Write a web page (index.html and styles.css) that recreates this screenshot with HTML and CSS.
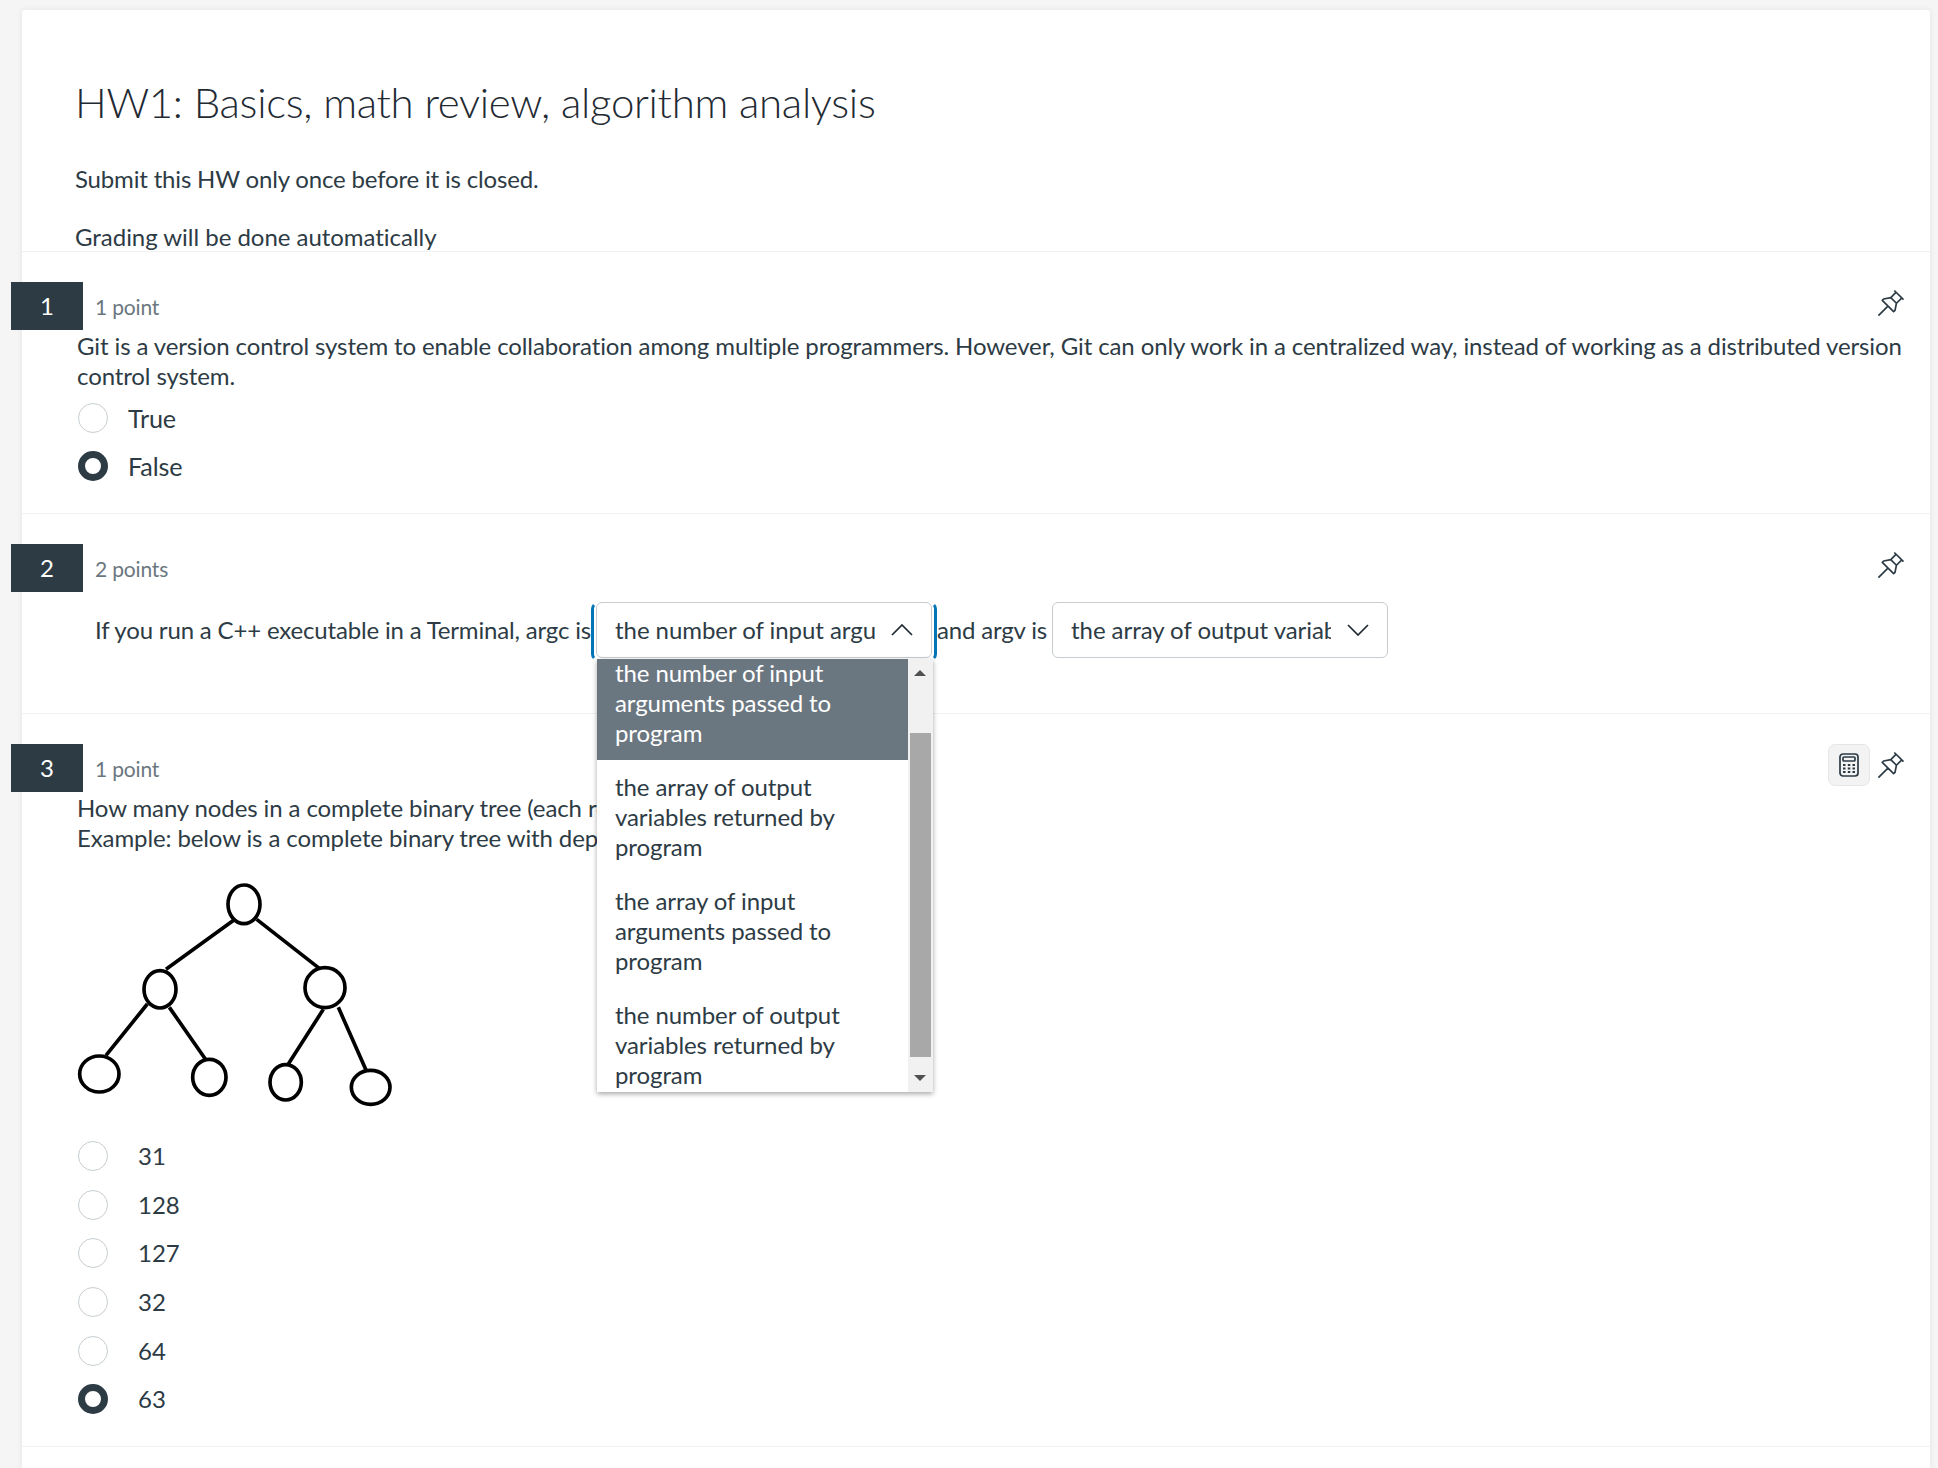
FILE: index.html
```html
<!DOCTYPE html>
<html lang="en">
<head>
<meta charset="utf-8">
<title>HW1: Basics, math review, algorithm analysis</title>
<link rel="stylesheet" href="styles.css">
</head>
<body>
<main class="card">
  <header class="intro">
    <h1 class="title">HW1: Basics, math review, algorithm analysis</h1>
    <p class="intro-line">Submit this HW only once before it is closed.</p>
    <p class="intro-line intro-last">Grading will be done automatically</p>
  </header>

  <section class="question q1">
    <div class="q-head">
      <div class="badge">1</div>
      <div class="points">1 point</div>
      <div class="actions">
        <svg class="pin" viewBox="0 0 32 32"><g transform="rotate(45 16 16)"><path d="M9.5 2h13M12 2.5V9.5L8 15.5V17.5H24V15.5L20 9.5V2.5M12 9.5H20M16 17.5V31"/></g></svg>
      </div>
    </div>
    <p class="q-text">Git is a version control system to enable collaboration among multiple programmers. However, Git can only work in a centralized way, instead of working as a distributed version control system.</p>
    <div class="options tf">
      <label class="opt"><span class="radio"></span><span>True</span></label>
      <label class="opt"><span class="radio on"></span><span>False</span></label>
    </div>
  </section>

  <section class="question q2">
    <div class="q-head">
      <div class="badge">2</div>
      <div class="points">2 points</div>
      <div class="actions">
        <svg class="pin" viewBox="0 0 32 32"><g transform="rotate(45 16 16)"><path d="M9.5 2h13M12 2.5V9.5L8 15.5V17.5H24V15.5L20 9.5V2.5M12 9.5H20M16 17.5V31"/></g></svg>
      </div>
    </div>
    <div class="fill">
      <span>If you run a C++ executable in a Terminal, argc is</span>
      <div class="select-wrap open">
        <div class="select">
          <span class="select-text">the number of input arguments passed to program</span>
          <svg class="chev" viewBox="0 0 22 12"><path d="M1 11L11 1L21 11"/></svg>
        </div>
        <div class="list">
          <div class="list-items">
            <div class="item active">the number of input arguments passed to program</div>
            <div class="item">the array of output variables returned by program</div>
            <div class="item">the array of input arguments passed to program</div>
            <div class="item">the number of output variables returned by program</div>
          </div>
          <div class="scrollbar">
            <div class="arrow-zone up"><span class="tri-up"></span></div>
            <div class="thumb"></div>
            <div class="arrow-zone down"><span class="tri-down"></span></div>
          </div>
        </div>
      </div>
      <span>and argv is</span>
      <div class="select-wrap">
        <div class="select">
          <span class="select-text">the array of output variables returned by program</span>
          <svg class="chev" viewBox="0 0 22 12"><path d="M1 1L11 11L21 1"/></svg>
        </div>
      </div>
    </div>
  </section>

  <section class="question q3">
    <div class="q-head">
      <div class="badge">3</div>
      <div class="points">1 point</div>
      <div class="actions">
        <button class="calc" type="button" aria-label="Calculator">
          <svg viewBox="0 0 20 24" width="20" height="24">
            <rect class="calc-body" x="1" y="1" width="18" height="22" rx="3"/>
            <rect class="calc-body" x="4" y="4" width="12" height="4" rx="1"/>
            <path class="calc-keys" d="M4 11h2.500v2H4zM8.800 11h2.500v2H8.800zM13.500 11H16v2h-2.500zM4 14.500h2.500v2H4zM8.800 14.500h2.500v2H8.800zM13.500 14.500H16v2h-2.500zM4 18h2.500v2H4zM8.800 18h2.500v2H8.800zM13.500 18H16v2h-2.500z"/>
          </svg>
        </button>
        <svg class="pin" viewBox="0 0 32 32"><g transform="rotate(45 16 16)"><path d="M9.5 2h13M12 2.5V9.5L8 15.5V17.5H24V15.5L20 9.5V2.5M12 9.5H20M16 17.5V31"/></g></svg>
      </div>
    </div>
    <p class="q-text">How many nodes in a complete binary tree (each row filled) of depth 5?<br>Example: below is a complete binary tree with depth 2</p>
    <svg class="tree" viewBox="0 0 1050 750">
      <ellipse cx="552" cy="103" rx="48" ry="58"/>
      <ellipse cx="300" cy="358" rx="48" ry="56"/>
      <ellipse cx="795" cy="353" rx="60" ry="60"/>
      <ellipse cx="118" cy="612" rx="59" ry="54"/>
      <ellipse cx="448" cy="622" rx="50" ry="54"/>
      <ellipse cx="677" cy="637" rx="47" ry="53"/>
      <ellipse cx="932" cy="652" rx="58" ry="51"/>
      <path d="M525 148L318 298M590 148L778 295M262 402L138 556M328 412L438 570M790 418L685 582M835 412L918 600"/>
    </svg>
    <div class="options nums">
      <label class="opt"><span class="radio"></span><span>31</span></label>
      <label class="opt"><span class="radio"></span><span>128</span></label>
      <label class="opt"><span class="radio"></span><span>127</span></label>
      <label class="opt"><span class="radio"></span><span>32</span></label>
      <label class="opt"><span class="radio"></span><span>64</span></label>
      <label class="opt"><span class="radio on"></span><span>63</span></label>
    </div>
  </section>
</main>
</body>
</html>
```
FILE: styles.css
```css
* { box-sizing: border-box; }
html, body { margin: 0; height: 100%; overflow: hidden; }
body {
  background: #f5f5f5;
  padding: 10px 8px 0 22px;
  font-family: "Lato", "Liberation Sans", sans-serif;
  font-size: 24px;
  line-height: 30px;
  letter-spacing: -0.17px;
  color: #2d3b45;
}
.card {
  background: #fff;
  height: 100%;
  border-radius: 3px 3px 0 0;
  box-shadow: 0 0 6px rgba(0, 0, 0, 0.08);
}
.intro {
  padding: 63px 0 0 53px;
  height: 241px;
}
.title {
  margin: 0;
  font-size: 42px;
  line-height: 58px;
  font-weight: 300;
  letter-spacing: -0.31px;
  color: #1f2a33;
}
.intro-line { margin: 0; }
.title + .intro-line { margin-top: 33px; }
.intro-last { margin-top: 28px; letter-spacing: -0.03px; }

.question {
  border-top: 1px solid #f0f1f2;
  padding: 30px 23px 0 55px;
}
.q1 { height: 262px; }
.q2 { height: 200px; }
.q3 { height: 734px; border-bottom: 1px solid #f0f1f2; }
.q-head {
  display: flex;
  align-items: flex-start;
  height: 48px;
}
.badge {
  width: 72px;
  height: 48px;
  margin-left: -66px;
  background: #2d3b45;
  color: #fff;
  display: flex;
  align-items: center;
  justify-content: center;
  font-size: 24px;
}
.points {
  margin-left: 12px;
  margin-top: 10px;
  font-size: 21px;
  line-height: 30px;
  color: #6b7780;
}
.actions {
  margin-left: auto;
  margin-right: 2px;
  height: 42px;
  display: flex;
  align-items: center;
  gap: 3px;
}
.pin { width: 32px; height: 32px; margin-top: 3px; }
.pin path {
  fill: none;
  stroke: #2d3b45;
  stroke-width: 1.7;
  stroke-linejoin: round;
}
.calc {
  width: 42px;
  height: 42px;
  padding: 0;
  background: #f3f3f3;
  border: 1px solid #e6e6e6;
  border-radius: 7px;
  display: flex;
  align-items: center;
  justify-content: center;
}
.calc-body { fill: none; stroke: #2d3b45; stroke-width: 1.7; }
.calc-keys { fill: #2d3b45; }

.q-text { margin: 1px 0 0; letter-spacing: -0.11px; }
.options { display: flex; flex-direction: column; }
.opt { display: flex; align-items: center; height: 30px; }
.radio {
  width: 30px;
  height: 30px;
  margin-left: 1px;
  border-radius: 50%;
  border: 1px solid #c7cdd1;
  background: #fff;
  flex: none;
}
.radio.on { border: 7px solid #2d3b45; }
.tf { margin-top: 12px; gap: 18px; font-size: 25.200px; }
.tf .radio { margin-right: 20px; }
.nums { margin-top: 21px; gap: 18.700px; letter-spacing: 0; }
.nums .radio { margin-right: 30px; }

.fill {
  display: flex;
  align-items: center;
  margin: 10px 0 0 18px;
  height: 56px;
}
.select-wrap {
  position: relative;
  width: 336px;
  height: 56px;
  margin: 0 5px;
}
.select-wrap.open { z-index: 2; }
.select-wrap.open::before {
  content: "";
  position: absolute;
  top: 0;
  bottom: -3px;
  left: -5px;
  right: -5px;
  border: 3px solid transparent;
  border-left-color: #0374b5;
  border-right-color: #0374b5;
  border-radius: 7px;
}
.select {
  position: relative;
  height: 56px;
  padding: 0 18px 0 18px;
  display: flex;
  align-items: center;
  background: #fff;
  border: 1px solid #c7cdd1;
  border-radius: 6px;
}
.select-text {
  width: 260px;
  overflow: hidden;
  white-space: nowrap;
  letter-spacing: -0.05px;
  flex: none;
}
.chev { width: 22px; height: 12px; margin-left: auto; }
.chev path { fill: none; stroke: #1f2a33; stroke-width: 1.7; }

.list {
  position: absolute;
  top: 57px;
  left: 1px;
  width: 336px;
  height: 433px;
  display: flex;
  background: #fff;
  overflow: hidden;
  box-shadow: 0 2px 5px rgba(0, 0, 0, 0.35);
}
.list-items { width: 311px; margin-top: -13px; flex: none; letter-spacing: -0.08px; }
.item { padding: 12px 36px 12px 18px; height: 114px; }
.item.active { background: #6b7780; color: #fff; }
.scrollbar {
  flex: 1;
  background: #f1f1f1;
  display: flex;
  flex-direction: column;
  align-items: center;
}
.thumb { width: 21px; height: 324px; background: #a8a8a8; flex: none; }
.arrow-zone { display: flex; justify-content: center; flex: none; }
.up { height: 74px; padding-top: 11px; }
.down { flex: 1; padding-top: 18px; }
.tri-up, .tri-down {
  width: 0;
  height: 0;
  border-left: 6px solid transparent;
  border-right: 6px solid transparent;
}
.tri-up { border-bottom: 6px solid #505050; }
.tri-down { border-top: 6px solid #505050; }

.tree {
  display: block;
  width: 350px;
  height: 250px;
  margin: 17px 0 0 -17px;
}
.tree ellipse, .tree path { fill: none; stroke: #000; stroke-width: 11; }
```
